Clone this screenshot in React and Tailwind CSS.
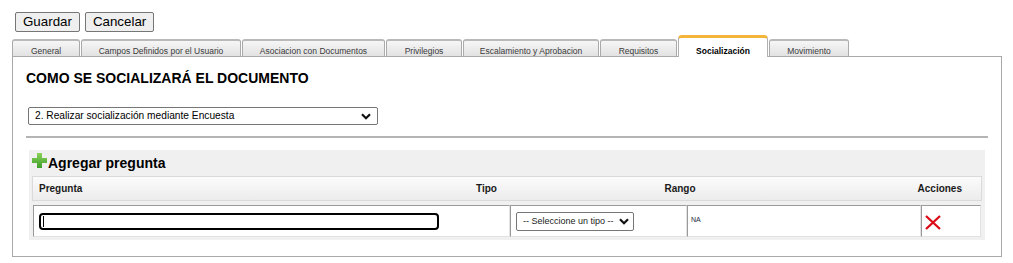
const tabs = [
  { label: 'General', w: 'w-[68px]' },
  { label: 'Campos Definidos por el Usuario', w: 'w-[160px]' },
  { label: 'Asociacion con Documentos', w: 'w-[143px]' },
  { label: 'Privilegios', w: 'w-[76px]' },
  { label: 'Escalamiento y Aprobacion', w: 'w-[136px]' },
  { label: 'Requisitos', w: 'w-[77px]' },
  { label: 'Socialización', w: 'w-[90px]', active: true },
  { label: 'Movimiento', w: 'w-[80px]' },
];

function Chevron() {
  return (
    <svg width="10" height="7" viewBox="0 0 10 7" className="shrink-0">
      <path d="M1 1.2 L5 5.2 L9 1.2" fill="none" stroke="#111" strokeWidth="2.2" />
    </svg>
  );
}

function Plus() {
  return (
    <svg width="15" height="15" viewBox="0 0 15 15" className="shrink-0">
      <defs>
        <linearGradient id="pg" x1="0" y1="0" x2="0" y2="1">
          <stop offset="0" stopColor="#8bd35a" />
          <stop offset="1" stopColor="#3f9e2a" />
        </linearGradient>
      </defs>
      <path d="M5 0 H10 V5 H15 V10 H10 V15 H5 V10 H0 V5 H5 Z" fill="url(#pg)" />
    </svg>
  );
}

function RedX() {
  return (
    <svg width="16" height="15" viewBox="0 0 16 15">
      <path d="M1 1 L15 14 M15 1 L1 14" stroke="#dc0a16" strokeWidth="2.3" strokeLinecap="butt" />
    </svg>
  );
}

export default function App() {
  return (
    <div className="w-[1013px] h-[263px] bg-white pt-[12px] pl-[12px] font-['Liberation_Sans',Arial,sans-serif] text-black">
      <div className="flex gap-[5px] ml-[3px]">
        <button className="h-[20px] px-[7px] text-[13.33px] leading-none border border-[#767676] rounded-[2px] bg-[#efefef] text-black">
          Guardar
        </button>
        <button className="h-[20px] px-[7px] text-[13.33px] leading-none border border-[#767676] rounded-[2px] bg-[#efefef] text-black">
          Cancelar
        </button>
      </div>

      <div className="mt-[3px] flex items-end gap-px h-[21px]">
        {tabs.map((t) =>
          t.active ? (
            <div
              key={t.label}
              className={`${t.w} h-[22px] -mb-px relative z-10 bg-white border-x border-[#b0b0b0] border-t-[3px] border-t-[#f5b53a] rounded-t-[4px] flex items-end justify-center pb-px text-[8.5px] leading-[10px] font-bold text-black`}
            >
              {t.label}
            </div>
          ) : (
            <div
              key={t.label}
              className={`${t.w} h-[17px] bg-gradient-to-b from-[#f6f6f6] to-[#e2e2e2] border-x border-[#aaaaaa] border-t-2 border-t-[#b9b9b9] rounded-t-[3px] flex items-end justify-center text-[8.5px] leading-[10px] text-[#3a3a3a]`}
            >
              {t.label}
            </div>
          )
        )}
      </div>

      <div className="w-[990px] h-[201px] border border-[#a9a9a9] pt-[13px] px-[13px]">
        <div className="text-[14px] leading-[16px] font-bold">COMO SE SOCIALIZARÁ EL DOCUMENTO</div>

        <div className="mt-[21px] ml-[2px] w-[350px] h-[18px] border border-[#767676] rounded-[2px] bg-white flex items-center justify-between pl-[6px] pr-[6px]">
          <span className="text-[10.2px] leading-none">2. Realizar socialización mediante Encuesta</span>
          <Chevron />
        </div>

        <div className="mt-[11px] w-[962px] h-[2px] bg-[#b4b4b4]" />

        <div className="mt-[12px] ml-[3px] w-[956px] bg-[#f0f0f0] pt-[3px] px-[3px] pb-[3px]">
          <div className="flex items-start h-[16px]">
            <Plus />
            <span className="ml-px mt-[2px] text-[14px] leading-[16px] font-bold">Agregar pregunta</span>
          </div>

          <div className="mt-[7px] h-[25px] border border-[#dadada] bg-gradient-to-b from-[#fbfbfb] to-[#ececec] flex items-center text-[10px] font-bold text-[#1a1a1a]">
            <div className="w-[366px] pl-[6px]">Pregunta</div>
            <div className="w-[175px] text-center">Tipo</div>
            <div className="w-[212px] text-center">Rango</div>
            <div className="flex-1 text-right pr-[19px]">Acciones</div>
          </div>

          <div className="mt-[4px] mx-px h-[32px] flex bg-white">
            <div className="w-[477px] border-l border-t border-[#9a9a9a] border-r border-r-[#e2e2e2] border-b border-b-[#e2e2e2] flex items-center pl-[5px]">
              <div className="w-[400px] h-[17px] border-2 border-black rounded-[4px] flex items-center pl-[2px]">
                <div className="w-px h-[11px] bg-black" />
              </div>
            </div>
            <div className="w-[177px] border-l border-t border-[#9a9a9a] border-r border-r-[#e2e2e2] border-b border-b-[#e2e2e2] flex items-center pl-[5px]">
              <div className="w-[118px] h-[19px] border border-[#767676] rounded-[2px] bg-white flex items-center justify-between pl-[6px] pr-[4px]">
                <span className="text-[9px] leading-none text-[#222]">-- Seleccione un tipo --</span>
                <Chevron />
              </div>
            </div>
            <div className="w-[234px] border-l border-t border-[#9a9a9a] border-r border-r-[#e2e2e2] border-b border-b-[#e2e2e2] flex items-center pl-[3px] pb-[4px]">
              <span className="text-[7px] leading-none text-[#1c2a3a]">NA</span>
            </div>
            <div className="w-[60px] border-l border-t border-[#9a9a9a] border-r border-r-[#e2e2e2] border-b border-b-[#e2e2e2] flex items-center pl-[3px] pt-[2px]">
              <RedX />
            </div>
          </div>
        </div>
      </div>
    </div>
  );
}
